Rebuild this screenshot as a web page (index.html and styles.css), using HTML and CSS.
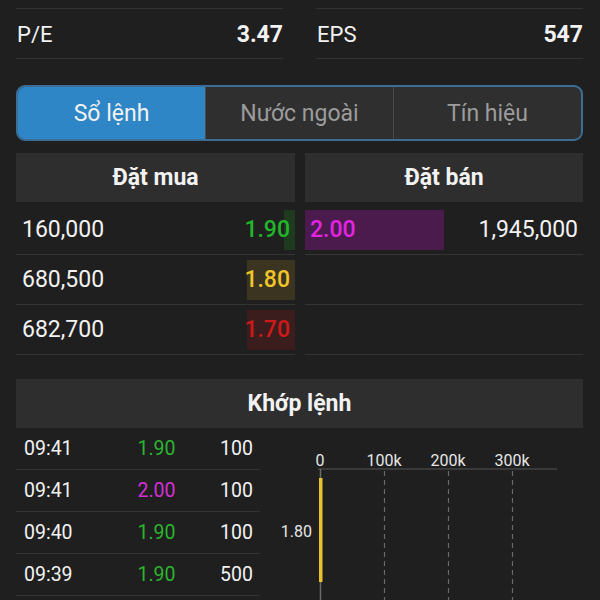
FILE: index.html
```
<!DOCTYPE html>
<html lang="vi">
<head>
<meta charset="utf-8">
<link rel="stylesheet" href="styles.css">
</head>
<body>
<div class="page">
  <div class="stats">
    <div class="stat"><span class="label">P/E</span><span class="value">3.47</span></div>
    <div class="stat"><span class="label">EPS</span><span class="value">547</span></div>
  </div>

  <div class="tabs">
    <div class="tab active">Sổ lệnh</div>
    <div class="tab">Nước ngoài</div>
    <div class="tab">Tín hiệu</div>
  </div>

  <div class="book">
    <div class="side buy">
      <div class="head">Đặt mua</div>
      <div class="row"><span class="bar bar-green" style="width:11px"></span><span class="vol">160,000</span><span class="price green">1.90</span></div>
      <div class="row"><span class="bar bar-yellow" style="width:48px"></span><span class="vol">680,500</span><span class="price yellow">1.80</span></div>
      <div class="row"><span class="bar bar-red" style="width:48px"></span><span class="vol">682,700</span><span class="price red">1.70</span></div>
    </div>
    <div class="side sell">
      <div class="head">Đặt bán</div>
      <div class="row"><span class="bar bar-purple" style="width:139px"></span><span class="price magenta">2.00</span><span class="vol">1,945,000</span></div>
      <div class="row"></div>
      <div class="row"></div>
    </div>
  </div>

  <div class="match">
    <div class="head">Khớp lệnh</div>
    <div class="match-body">
      <div class="trades">
        <div class="trow"><span class="t">09:41</span><span class="p green2">1.90</span><span class="v">100</span></div>
        <div class="trow"><span class="t">09:41</span><span class="p magenta2">2.00</span><span class="v">100</span></div>
        <div class="trow"><span class="t">09:40</span><span class="p green2">1.90</span><span class="v">100</span></div>
        <div class="trow"><span class="t">09:39</span><span class="p green2">1.90</span><span class="v">500</span></div>
      </div>
      <div class="chart">
        <svg width="323" height="172" viewBox="0 0 323 172">
          <g class="axis-labels">
            <text x="60" y="32" text-anchor="middle">0</text>
            <text x="124" y="32" text-anchor="middle">100k</text>
            <text x="188" y="32" text-anchor="middle">200k</text>
            <text x="252" y="32" text-anchor="middle">300k</text>
          </g>
          <line x1="58" y1="41" x2="297" y2="41" stroke="#555" stroke-width="1"/>
          <line x1="60.5" y1="41" x2="60.5" y2="172" stroke="#6a6a6a" stroke-width="1.5"/>
          <line x1="124.5" y1="43" x2="124.5" y2="172" stroke="#6a6a6a" stroke-width="1.2" stroke-dasharray="5 4"/>
          <line x1="188.5" y1="43" x2="188.5" y2="172" stroke="#6a6a6a" stroke-width="1.2" stroke-dasharray="5 4"/>
          <line x1="252.5" y1="43" x2="252.5" y2="172" stroke="#6a6a6a" stroke-width="1.2" stroke-dasharray="5 4"/>
          <rect x="59" y="50" width="3.5" height="104" fill="#e8c22a"/>
          <text class="ylabel" x="52" y="103" text-anchor="end">1.80</text>
        </svg>
      </div>
    </div>
  </div>
</div>
</body>
</html>
```

FILE: styles.css
```
html, body {
  margin: 0;
  padding: 0;
  background: #1f1f1f;
  color: #f2f2f2;
  font-family: Roboto, "Noto Sans", sans-serif;
  overflow: hidden;
}

.page {
  padding: 8px 17px 0 16px;
}

.stats {
  display: flex;
  gap: 33px;
}

.stat {
  flex: 1;
  display: flex;
  justify-content: space-between;
  align-items: center;
  box-sizing: border-box;
  height: 51px;
  padding-top: 2px;
  border-top: 1px solid #333;
  border-bottom: 1px solid #333;
  font-size: 22px;
}

.stat .label {
  padding-left: 1px;
}

.stat .value {
  font-weight: 700;
  font-size: 23px;
}

.tabs {
  margin-top: 26px;
  display: flex;
  height: 56px;
  box-sizing: border-box;
  border: 2px solid #3c6d94;
  border-radius: 9px;
  overflow: hidden;
  background: #2f2f2f;
}

.tab {
  flex: 1;
  display: flex;
  align-items: center;
  justify-content: center;
  font-size: 23px;
  color: #9c9c9c;
  border-left: 1px solid #4a4a4a;
}

.tab:first-child {
  border-left: none;
}

.tab.active {
  background: #2e86c6;
  color: #f2f2f2;
}

.book {
  margin-top: 12px;
  display: flex;
  gap: 10px;
}

.side {
  flex: 1;
}

.side.buy {
  flex: 0 0 279px;
}

.head {
  height: 49px;
  background: #2e2e2e;
  display: flex;
  align-items: center;
  justify-content: center;
  font-weight: 700;
  font-size: 23px;
}

.side .head {
  margin-bottom: 3px;
}

.row {
  position: relative;
  height: 49px;
  border-bottom: 1px solid #343434;
  display: flex;
  justify-content: space-between;
  align-items: center;
  font-size: 23px;
}

.buy .row {
  padding: 0 5px 0 6px;
}

.sell .row {
  padding: 0 5px 0 5px;
}

.bar {
  position: absolute;
  top: 5px;
  height: 40px;
}

.buy .bar {
  right: 0;
}

.sell .bar {
  left: 0;
}

.vol,
.price {
  position: relative;
}

.price {
  font-weight: 500;
}

.bar-green { background: #1e3b20; }
.bar-yellow { background: #3a3420; }
.bar-red { background: #3b1d1d; }
.bar-purple { background: #4a1b4c; }

.green { color: #22b52a; }
.yellow { color: #efc52a; }
.red { color: #cc1a1a; }
.magenta { color: #e324e3; }

.match {
  margin-top: 24px;
}

.match-body {
  display: flex;
}

.trades {
  flex: 0 0 244px;
}

.trow {
  height: 41px;
  border-bottom: 1px solid #343434;
  display: grid;
  grid-template-columns: 1fr 1fr 1fr;
  align-items: center;
  font-size: 19.5px;
  padding: 0 7px 0 8px;
}

.trow .t { text-align: left; }
.trow .p { text-align: center; padding-left: 36px; }
.trow .v { text-align: right; }

.green2 { color: #2bb52f; }
.magenta2 { color: #d42fd6; }

.chart {
  flex: 1;
}

.chart svg {
  display: block;
}

.chart text {
  font-family: Roboto, "Noto Sans", sans-serif;
  font-size: 16px;
  fill: #e6e6e6;
  dominant-baseline: central;
}
```
